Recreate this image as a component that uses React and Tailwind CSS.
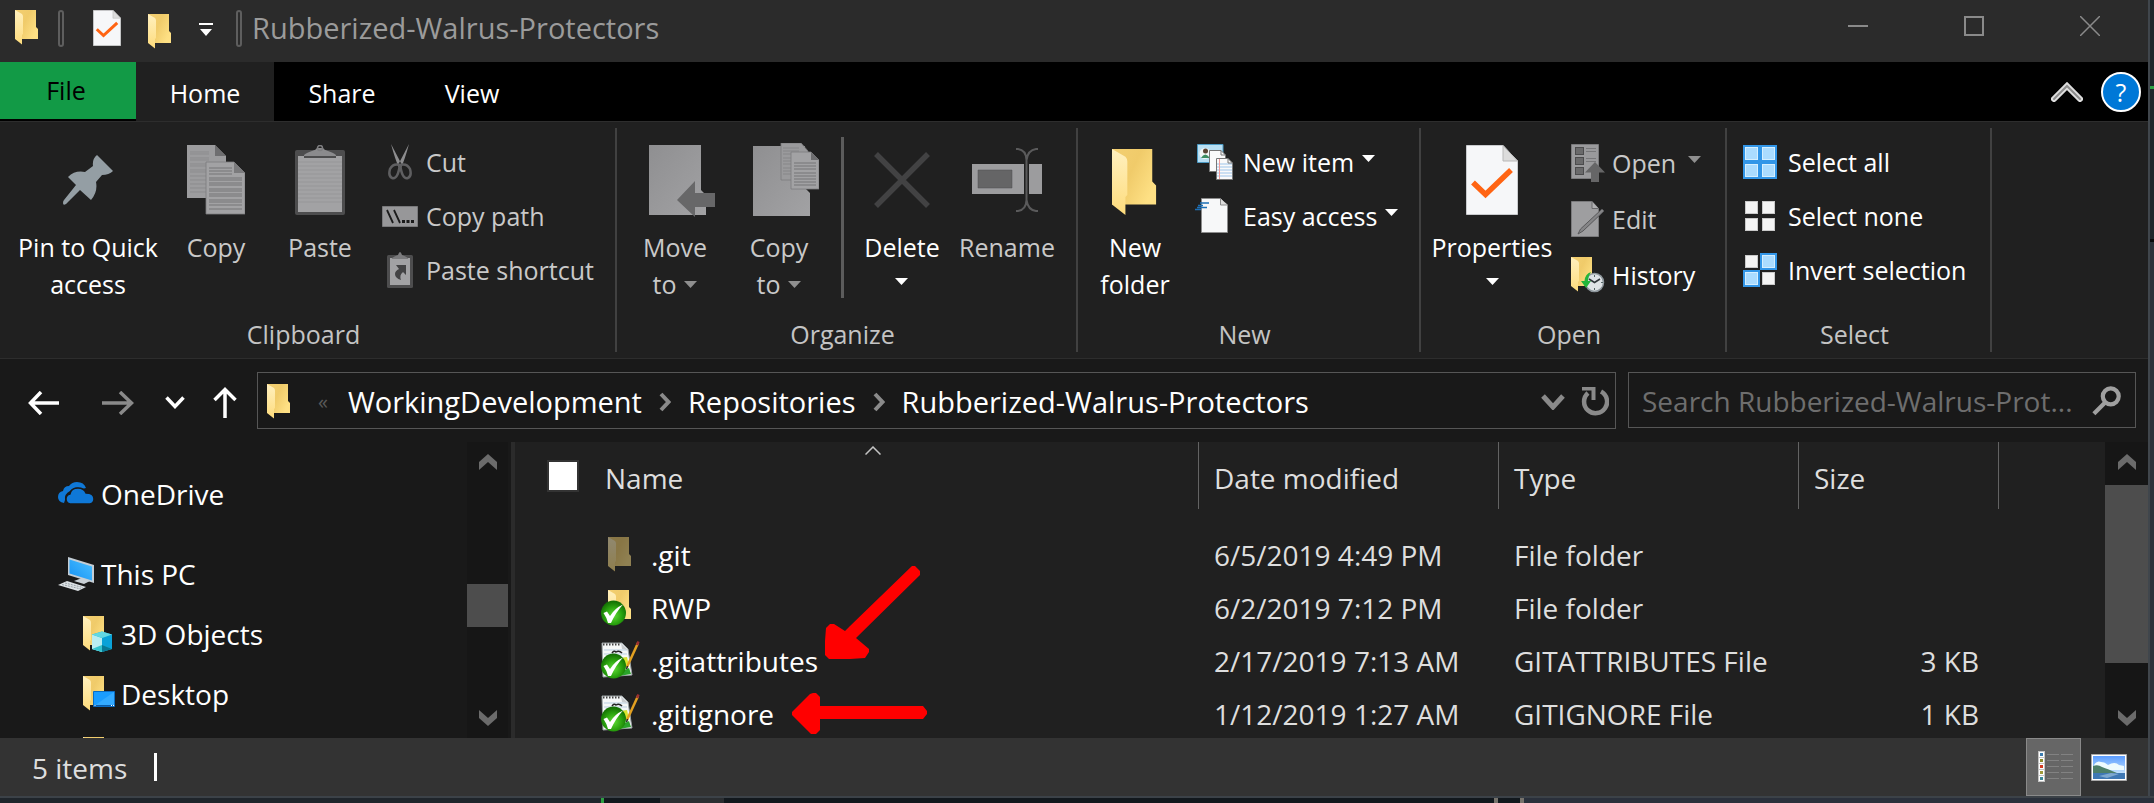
import React from "react";

/* ---------- shared gradients ---------- */
function Defs() {
  return (
    <svg width="0" height="0" className="absolute" aria-hidden="true">
      <defs>
        <linearGradient id="folderBack" x1="0" y1="0" x2="1" y2="0.6">
          <stop offset="0" stopColor="#f3cf72" />
          <stop offset="0.5" stopColor="#f0cb6a" />
          <stop offset="1" stopColor="#fee084" />
        </linearGradient>
        <linearGradient id="folderFlap" x1="0" y1="0" x2="0" y2="1">
          <stop offset="0" stopColor="#fff0bf" />
          <stop offset="1" stopColor="#fedc7c" />
        </linearGradient>
        <linearGradient id="grayPage" x1="0" y1="0" x2="1" y2="1">
          <stop offset="0" stopColor="#8f8f91" />
          <stop offset="1" stopColor="#a2a2a4" />
        </linearGradient>
        <radialGradient id="greenBall" cx="0.5" cy="0.6" r="0.55">
          <stop offset="0" stopColor="#5fdc35" />
          <stop offset="0.6" stopColor="#2ba30f" />
          <stop offset="1" stopColor="#157304" />
        </radialGradient>
        <linearGradient id="blueScreen" x1="0" y1="1" x2="1" y2="0">
          <stop offset="0" stopColor="#1592f5" />
          <stop offset="1" stopColor="#4cc0ff" />
        </linearGradient>
        <linearGradient id="sky" x1="0" y1="0" x2="0" y2="1">
          <stop offset="0" stopColor="#5a9cff" />
          <stop offset="1" stopColor="#e6f8fc" />
        </linearGradient>
      </defs>
    </svg>
  );
}

/* ---------- icons ---------- */
const FolderShape = () => (
  <>
    <path d="M0 0H21V17L23 19V29H0Z" fill="url(#folderBack)" />
    <path d="M0 0L7 4Q8 5 8 6.500V24L7 25V34.500L0 29Z" fill="url(#folderFlap)" />
  </>
);

const Folder = ({ className = "w-6 h-[35px]" }) => (
  <svg viewBox="0 0 24 35" className={className} aria-hidden="true">
    <FolderShape />
  </svg>
);

const PropertiesDoc = ({ className }) => (
  <svg viewBox="0 0 52 70" preserveAspectRatio="none" className={className} aria-hidden="true">
    <path d="M0.500 0.500H37L51.500 16V69.500H0.500Z" fill="#f6f7f9" stroke="#c9cbce" />
    <path d="M37 0.500V16H51.500Z" fill="#dcdcdc" stroke="#b8b8b8" />
    <path d="M7 37.500L19.500 49.500L45 25" fill="none" stroke="#ff6413" strokeWidth="5.500" />
  </svg>
);

const Caret = ({ className = "text-white" }) => (
  <svg viewBox="0 0 13 7" width="13" height="7" className={className} aria-hidden="true">
    <path d="M0 0H13L6.500 7Z" fill="currentColor" />
  </svg>
);

const QuickCaret = () => (
  <svg viewBox="0 0 14 14" width="14" height="14" aria-hidden="true">
    <path d="M0 0H14V2H0ZM1 6H13L7 13Z" fill="#fff" />
  </svg>
);

const Pin = () => (
  <svg viewBox="0 0 50 50" width="50" height="50" aria-hidden="true">
    <path
      d="M34 0L50 16Q46 20 39 20L33 27Q35 37 28 45L17 35L3 49Q0 51 0 48Q0 46 1 45L13 30L5 22Q12 15 22 17L30 11Q29 4 34 0Z"
      fill="#949ea4"
    />
  </svg>
);

const lines = (x1, x2, ys, color) =>
  ys.map((y) => <path key={y} d={`M${x1} ${y}H${x2}`} stroke={color} strokeWidth="1" />);

const CopyPages = () => (
  <svg viewBox="0 0 58 70" width="58" height="70" aria-hidden="true">
    <path d="M0 0H28L39 11V53H0Z" fill="#9c9c9e" />
    <path d="M28 0L39 11H28Z" fill="#6e6e70" />
    {lines(3, 22, [7, 9, 13, 15, 19, 21, 25, 27, 31, 35, 39, 43, 47], "#8b8b8d")}
    <path d="M19 17H47L58 28V69H19Z" fill="#a2a2a4" stroke="#7c7c7e" strokeWidth="0.8" />
    <path d="M47 17L58 28H47Z" fill="#7b7b7d" />
    {lines(22, 55, [33, 35, 38, 40, 44, 46, 49, 51, 55, 57, 60, 64], "#747476")}
    {lines(22, 45, [23, 26, 29], "#747476")}
  </svg>
);

const PasteBoard = () => (
  <svg viewBox="0 0 50 70" width="50" height="70" aria-hidden="true">
    <rect x="0" y="5" width="50" height="65" rx="2" fill="#4d4d4e" />
    <path d="M3 11H47V67H3Z" fill="#a2a2a4" />
    {lines(3, 47, [17, 21, 25, 29, 33, 37, 41, 45, 49, 53, 57], "#969698")}
    <path d="M9 10Q11 8 17 6Q21 5 22 3H28Q29 5 33 6Q39 8 41 10V13H9Z" fill="#8b8b8d" />
    <path d="M9 12H41" stroke="#4d4d4e" strokeWidth="2" />
    <circle cx="25" cy="3" r="2.500" fill="none" stroke="#7e7e80" strokeWidth="1.500" />
  </svg>
);

const Scissors = () => (
  <svg viewBox="0 0 24 36" width="24" height="36" aria-hidden="true">
    <path d="M3 0L14 21L11 24Q7 15 3 0ZM21 0L10 21L13 24Q17 15 21 0Z" fill="#8d8d8f" />
    <g fill="none" stroke="#5f5f61" strokeWidth="2.500">
      <path d="M12 20Q10 36 4 34Q0 32 2 25Q5 19 12 21" />
      <path d="M12 20Q14 36 20 34Q24 32 22 25Q19 19 12 21" />
    </g>
  </svg>
);

const CopyPathIcon = () => (
  <svg viewBox="0 0 36 21" width="36" height="21" aria-hidden="true">
    <path d="M0.500 0.500H35.500V20.500H0.500Z" fill="#979799" stroke="#7a7a7c" />
    <path d="M5 4L11 17M12 4L18 17" stroke="#1b1b1b" strokeWidth="1.800" />
    <path d="M20 14H23V17H20ZM24.500 14H27.500V17H24.500ZM29 14H32V17H29Z" fill="#1b1b1b" />
  </svg>
);

const PasteShortcutIcon = () => (
  <svg viewBox="0 0 26 36" width="26" height="36" aria-hidden="true">
    <rect x="0" y="3" width="26" height="33" rx="1.500" fill="#4d4d4e" />
    <path d="M3 6H23V33H3Z" fill="#a2a2a4" />
    <path d="M5 6Q8 4 11 3Q12 0 13 0Q14 0 15 3Q18 4 21 6V7H5Z" fill="#7b7b7d" />
    <path d="M9 13H19V23L16 20Q12 23 14 28Q8 26 8 22Q8 19 12 17Z" fill="#434344" />
  </svg>
);

const MoveTo = () => (
  <svg viewBox="-14 -2 80 74" width="80" height="74" aria-hidden="true">
    <path d="M0 0H52V45L57 50V70H0Z" fill="url(#grayPage)" />
    <path d="M28 55L46 36V48H66V62H46V72Z" fill="#676768" />
  </svg>
);

const CopyTo = () => (
  <svg viewBox="-14 0 80 74" width="80" height="74" aria-hidden="true">
    <path d="M0 3H52V45L57 50V73H0Z" fill="url(#grayPage)" />
    <path d="M28 0H48L55 8V37H28Z" fill="#9a9a9c" stroke="#7c7c7e" strokeWidth="0.800" />
    {lines(30, 46, [5, 8, 11, 15, 18, 21, 25, 28, 31], "#868688")}
    <path d="M38 9H58L66 17V46H38Z" fill="#a2a2a4" stroke="#7c7c7e" strokeWidth="0.800" />
    <path d="M58 9L66 17H58Z" fill="#6e6e70" />
    {lines(41, 63, [20, 23, 26, 30, 33, 36, 39, 42], "#747476")}
  </svg>
);

const DeleteX = () => (
  <svg viewBox="0 0 56 56" width="56" height="56" aria-hidden="true">
    <path d="M2 2L54 54M54 2L2 54" stroke="#424243" strokeWidth="5.500" />
  </svg>
);

const RenameIcon = () => (
  <svg viewBox="0 0 70 64" width="70" height="64" aria-hidden="true">
    <path d="M0 16H70V46H0Z" fill="#9c9c9e" />
    <path d="M6 22H40V40H6Z" fill="#656566" stroke="#4f4f50" strokeWidth="0.500" />
    <path d="M52 16H57V46H52Z" fill="#202020" />
    <path
      d="M44 1H46Q54 2 54.500 12V52Q54 62 46 63H44M66 1H64Q56 2 54.500 12V52Q56 62 64 63H66"
      fill="none"
      stroke="#5a5a5b"
      strokeWidth="2"
    />
  </svg>
);

const NewItemIcon = () => (
  <svg viewBox="0 0 36 36" width="36" height="36" aria-hidden="true">
    <path d="M0.500 0.500H26V18.500H0.500Z" fill="#b9e0f4" stroke="#4d9bc4" />
    <circle cx="8" cy="9.500" r="5.500" fill="#f3f6f7" />
    <circle cx="8.500" cy="7" r="2.500" fill="#5b4535" />
    <path d="M4 14Q8 7 13 14Z" fill="#3c8c62" />
    <path d="M12.500 6.500H24L28.500 11V27.500H12.500Z" fill="#fafafa" stroke="#777" />
    <path d="M24 6.500V11H28.500" fill="none" stroke="#777" />
    <path d="M19.500 14.500H31L35.500 19V35.500H19.500Z" fill="#fafafa" stroke="#777" />
    {lines(20, 35, [20, 23, 26, 29, 32], "#9cc4ea")}
    <path d="M22.500 15V35" stroke="#ef9a9a" />
    <path d="M31 14.500V19H35.500" fill="none" stroke="#777" />
  </svg>
);

const EasyAccessIcon = () => (
  <svg viewBox="0 0 40 36" width="40" height="36" aria-hidden="true">
    <path d="M6.500 0.500H25L32.500 7V34.500H6.500Z" fill="#f7f8f9" stroke="#8c8c8c" />
    <path d="M25.500 0.500V7H32.500" fill="#ddd" stroke="#8c8c8c" />
    <path d="M5 5H14M3 7.500H8M2 9.500H12M0 11.500H6" stroke="#1d6fb5" strokeWidth="1.500" />
  </svg>
);

const OpenIcon = () => (
  <svg viewBox="0 0 34 38" width="34" height="38" aria-hidden="true">
    <path d="M0.500 0.500H27.500V34.500H0.500Z" fill="#9a9a9c" stroke="#7a7a7c" />
    {[3, 13, 23].map((y) => (
      <rect key={y} x="4.500" y={y + 0.500} width="8" height="7" fill="#6a6a6b" stroke="#4c4c4d" />
    ))}
    {lines(15, 25, [4.5, 7.5, 14.5, 17.5], "#78787a")}
    <path d="M24 18L34 28.500H28V38H20V28.500H14Z" fill="#666667" />
  </svg>
);

const EditIcon = () => (
  <svg viewBox="0 0 34 36" width="34" height="36" aria-hidden="true">
    <path d="M0.500 0.500H21L27.500 7.500V35.500H0.500Z" fill="#9e9ea0" stroke="#7a7a7c" />
    <path d="M21 0.500V7.500H27.500" fill="#b0b0b2" stroke="#6a6a6c" />
    <path d="M31 8L33 10L12 30L7 33L9.500 28Z" fill="#858587" stroke="#58585a" />
  </svg>
);

const HistoryIcon = () => (
  <svg viewBox="0 0 34 36" width="34" height="36" aria-hidden="true">
    <FolderShape />
    <circle cx="23.500" cy="25.500" r="9" fill="#dfe3e6" stroke="#8e979d" strokeWidth="1.500" />
    <path d="M18 22L23.500 25.500L29 22" fill="none" stroke="#30363a" strokeWidth="1.500" />
    <path d="M23.500 18V20M23.500 31V33M30 25.500H32" stroke="#566" />
    <path d="M20 15Q14 17 13.500 24H10L15 31L20 24H17Q17 19 20 15Z" fill="#24b53a" />
  </svg>
);

const Tile = ({ x, y, on }) => (
  <rect
    x={x + 0.5}
    y={y + 0.5}
    width="12"
    height="12"
    fill={on ? "#abdcff" : "#f4f4f4"}
    stroke={on ? "#d5efff" : "#c9c9c9"}
  />
);

const SelectIcon = ({ kind }) => (
  <svg viewBox="0 0 34 34" width="34" height="34" aria-hidden="true">
    {kind === "all" && <path d="M0 0H34V34H0Z" fill="#3296e8" />}
    {kind === "invert" && <path d="M17 0H34V17H17ZM0 17H17V34H0Z" fill="#3296e8" />}
    <Tile x={2} y={2} on={kind === "all"} />
    <Tile x={19} y={2} on={kind !== "none"} />
    <Tile x={2} y={19} on={kind !== "none"} />
    <Tile x={19} y={19} on={kind === "all"} />
  </svg>
);

const ArrowLeft = ({ flip }) => (
  <svg viewBox="0 0 32 24" width="32" height="24" aria-hidden="true">
    <path
      d={flip ? "M0 12H29M18 1L29.500 12L18 23" : "M31 12H3M13 1L2.500 12L13 23"}
      fill="none"
      stroke="currentColor"
      strokeWidth="3.500"
    />
  </svg>
);

const ArrowUp = () => (
  <svg viewBox="0 0 24 32" width="24" height="32" aria-hidden="true">
    <path d="M12 31V3M1.500 13L12 2.500L22.500 13" fill="none" stroke="currentColor" strokeWidth="3.500" />
  </svg>
);

const ChevronDown = ({ w = 20 }) => (
  <svg viewBox="0 0 20 13" width={w} height="13" aria-hidden="true">
    <path d="M1.500 1.500L10 10.500L18.500 1.500" fill="none" stroke="currentColor" strokeWidth="3.500" />
  </svg>
);

const AddressChevron = () => (
  <svg viewBox="0 0 24 16" width="24" height="16" aria-hidden="true">
    <path d="M2 2L12 13L22 2" fill="none" stroke="currentColor" strokeWidth="5" />
  </svg>
);

const CrumbChevron = () => (
  <svg viewBox="0 0 12 20" width="12" height="20" className="text-[#8a8a8a]" aria-hidden="true">
    <path d="M2 2L9.500 10L2 18" fill="none" stroke="currentColor" strokeWidth="4" />
  </svg>
);

const Refresh = () => (
  <svg viewBox="0 0 28 30" width="28" height="30" aria-hidden="true">
    <path d="M20 4.500A11.500 11.500 0 1 1 7 6" fill="none" stroke="currentColor" strokeWidth="4.500" />
    <path d="M1 1.500H12.500V13" fill="none" stroke="currentColor" strokeWidth="4" />
  </svg>
);

const SearchIcon = () => (
  <svg viewBox="0 0 32 32" width="30" height="30" aria-hidden="true">
    <circle cx="20" cy="11" r="8.500" fill="none" stroke="currentColor" strokeWidth="4.500" />
    <path d="M14 17.500L2 29.500" stroke="currentColor" strokeWidth="4.500" />
  </svg>
);

const ScrollArrow = ({ down }) => (
  <svg viewBox="0 0 18 16" width="18" height="16" aria-hidden="true">
    <path d={down ? "M0 0L9 8L18 0V8L9 16L0 8Z" : "M0 16L9 8L18 16V8L9 0L0 8Z"} fill="#6b6b6b" />
  </svg>
);

const OneDrive = () => (
  <svg viewBox="0 0 36 24" width="36" height="24" aria-hidden="true">
    <path
      d="M6 21Q0 20 0 15Q0 10 5 9Q6 4 11 4Q14 0 19 0Q26 0 28 6L24 7Q17 3 12 9Q6 12 7 18Z"
      fill="#0f78d7"
    />
    <path
      d="M12 22Q8 21 8 17Q8 13 12 12Q13 6 20 6Q26 6 28 11Q36 11 36 17Q36 21 32 22Z"
      fill="#0f78d7"
      stroke="#191919"
      strokeWidth="1.500"
    />
  </svg>
);

const ThisPC = () => (
  <svg viewBox="0 0 36 34" width="36" height="34" aria-hidden="true">
    <path d="M10 0L36 8V26L10 18Z" fill="#c4cdd4" />
    <path d="M11.500 2.500L34 9.500V23.500L11.500 16.500Z" fill="url(#blueScreen)" />
    <path d="M16 24L24 21L32 24L26 27Z" fill="#c9d0d5" />
    <path d="M0 28L9 24L28 30L20 34Z" fill="#dde2e5" />
    <path d="M4 27.500L23 32M7 26L25 30.500" stroke="#98a1a7" strokeWidth="1" strokeDasharray="2 1" />
  </svg>
);

const Objects3D = () => (
  <svg viewBox="0 0 34 36" width="34" height="36" aria-hidden="true">
    <FolderShape />
    <path d="M9 18.500L19 15.500L29 18.500V33L19 36L9 33Z" fill="#19b5cf" />
    <path d="M9 18.500L19 22V36L9 33Z" fill="#b9edf2" />
    <path d="M9 33L19 29V36Z" fill="#35c4cf" />
    <path d="M19 22L29 18.500V33L19 29Z" fill="#0aa2d8" />
    <path d="M19 29L29 33L19 36Z" fill="#087a96" />
    <path d="M9 18.500L19 15.500L29 18.500L19 22Z" fill="#62d8e3" />
  </svg>
);

const DesktopFolder = () => (
  <svg viewBox="0 0 34 36" width="34" height="36" aria-hidden="true">
    <FolderShape />
    <path d="M10.500 15.500H31.500V30.500H10.500Z" fill="#1a9dff" stroke="#0b6cc2" />
    <path d="M11 30L31 16V30Z" fill="#34abff" />
    <path d="M11 29.500H31" stroke="#0a5ba8" />
    <path d="M11.500 29.500H13M28 29.500H31" stroke="#fff" strokeDasharray="1 1" />
  </svg>
);

const GreenCheck = () => (
  <>
    <circle cx="12.500" cy="25" r="12.500" fill="url(#greenBall)" />
    <path d="M2.500 25L6 23.500L9 28Q14 20 22 16.500Q15 24 10 35H7Q6 30 2.500 25Z" fill="#fff" />
  </>
);

const SyncedFolder = () => (
  <svg viewBox="0 0 40 40" width="40" height="40" aria-hidden="true">
    <g transform="translate(7 2)">
      <FolderShape />
    </g>
    <GreenCheck />
  </svg>
);

const SyncedNote = () => (
  <svg viewBox="0 0 40 40" width="40" height="40" aria-hidden="true">
    <path d="M1 2H21L27 8L31 34L2 36Z" fill="#f6f8f8" stroke="#9aa2a4" />
    <path d="M2 3.500H20" stroke="#444" strokeWidth="2" strokeDasharray="1.500 1.500" />
    {lines(3, 26, [9, 13, 17, 21], "#b9cfe2")}
    <path d="M20 2L21 8L27 9Z" fill="#c8cccf" />
    <path d="M11 12Q13 9 15 11Q18 9 21 12" fill="none" stroke="#222" strokeWidth="1.500" />
    <path d="M20 17L26 16L28 25L22 27Z" fill="#d9e52c" />
    <path d="M17 32L28 27L30 33L18 35Z" fill="#2aa32a" />
    <path d="M37 2L26 26" stroke="#e2a021" strokeWidth="2.500" />
    <path d="M37.500 0.500L36 4" stroke="#9c3030" strokeWidth="2.500" />
    <path d="M26.500 25L25.500 28" stroke="#222" strokeWidth="1.500" />
    <GreenCheck />
  </svg>
);

const HiddenFolder = () => (
  <svg viewBox="0 0 40 40" width="40" height="40" className="opacity-50" aria-hidden="true">
    <g transform="translate(7 2)">
      <FolderShape />
    </g>
  </svg>
);

const DetailsView = () => (
  <svg viewBox="0 0 36 32" width="36" height="32" aria-hidden="true">
    {["#3d7db0", "#8a8a2a", "#d33a22", "#a09a3a", "#3d8a9a"].map((c, i) => (
      <g key={c}>
        <rect x="0.500" y={0.5 + i * 6} width="6" height="6" fill="#fff" stroke="#c4c4c4" />
        <rect x="2" y={2 + i * 6} width="3" height="3" fill={c} />
        <path d={`M9 ${3.5 + i * 6}H21M23 ${3.5 + i * 6}H35`} stroke="#828282" />
      </g>
    ))}
  </svg>
);

const PictureView = () => (
  <svg viewBox="0 0 36 27" width="36" height="27" aria-hidden="true">
    <path d="M0.500 0.500H35.500V26.500H0.500Z" fill="#fff" stroke="#a9a9a9" />
    <path d="M2 2H34V25H2Z" fill="url(#sky)" />
    <path d="M3 11Q6 6 10 8Q14 8 17 11Q24 7 28 11L33 12V16H3Z" fill="#eefafd" />
    <path d="M2 12Q7 10 11 13Q17 15 26 19H2Z" fill="#4d7f6a" />
    <path d="M2 19H34V25H2Z" fill="#3f78b4" />
    <path d="M8 22L20 19L28 20L16 24Z" fill="#7ea8cf" />
  </svg>
);

/* ---------- ribbon pieces ---------- */
function Group({ label, className, pad = "", children }) {
  return (
    <section className={`flex shrink-0 flex-col border-r-2 border-[#414141] ${className}`}>
      <div className={`flex flex-1 ${pad}`}>{children}</div>
      <h2 className="pr-2 pb-[2px] text-center text-[25px] leading-8 text-[#c4c4c4]">{label}</h2>
    </section>
  );
}

function BigButton({ icon, className, children }) {
  return (
    <button type="button" className={`flex shrink-0 flex-col items-center gap-[6px] self-start pt-[9px] text-[25px] leading-[37px] ${className}`}>
      <span className="flex h-[86px] items-center justify-center">{icon}</span>
      <span className="block text-center whitespace-nowrap">{children}</span>
    </button>
  );
}

function SmallButton({ icon, caret, className, children }) {
  return (
    <button type="button" className={`flex items-center text-[25px] leading-8 whitespace-nowrap ${className}`}>
      <span className="flex w-10 shrink-0 justify-center">{icon}</span>
      <span>{children}</span>
      {caret && <span className="mb-2">{caret}</span>}
    </button>
  );
}

function Ribbon() {
  const off = "text-[#c9c9c9]";
  return (
    <div className="flex h-[238px] shrink-0 border-t border-b border-[#2d2d2d] bg-[#202020] py-[6px]">
      <Group label="Clipboard" className="w-[617px]" pad="pl-3">
        <BigButton icon={<Pin />} className="w-[152px] text-white">
          Pin to Quick
          <br />
          access
        </BigButton>
        <BigButton icon={<CopyPages />} className={`w-[104px] ${off}`}>Copy</BigButton>
        <BigButton icon={<PasteBoard />} className={`w-[104px] ${off}`}>Paste</BigButton>
        <div className="ml-2 flex flex-col pt-[7px]">
          <SmallButton icon={<Scissors />} className={`h-[54px] gap-[6px] ${off}`}>Cut</SmallButton>
          <SmallButton icon={<CopyPathIcon />} className={`h-[54px] gap-[6px] ${off}`}>Copy path</SmallButton>
          <SmallButton icon={<PasteShortcutIcon />} className={`h-[54px] gap-[6px] ${off}`}>Paste shortcut</SmallButton>
        </div>
      </Group>

      <Group label="Organize" className="w-[461px]" pad="pl-[6px]">
        <BigButton icon={<MoveTo />} className={`w-[104px] ${off}`}>
          Move
          <span className="flex items-center justify-center gap-2">to <Caret className="text-[#8f8f8f]" /></span>
        </BigButton>
        <BigButton icon={<CopyTo />} className={`w-[104px] ${off}`}>
          Copy
          <span className="flex items-center justify-center gap-2">to <Caret className="text-[#8f8f8f]" /></span>
        </BigButton>
        <div className="mt-[9px] ml-[10px] h-[161px] w-[3px] bg-[#5c5c5c]" />
        <BigButton icon={<DeleteX />} className="w-[116px] text-white">
          Delete
          <span className="flex h-[30px] items-center justify-center"><Caret /></span>
        </BigButton>
        <BigButton icon={<RenameIcon />} className={`w-[94px] ${off}`}>Rename</BigButton>
      </Group>

      <Group label="New" className="w-[343px]" pad="pl-[5px]">
        <BigButton icon={<Folder className="mt-1 h-[69px] w-[46px]" />} className="w-[104px] text-white">
          New
          <br />
          folder
        </BigButton>
        <div className="ml-2 flex flex-col pt-[7px]">
          <SmallButton icon={<NewItemIcon />} caret={<Caret />} className="h-[54px] gap-2 text-white">New item</SmallButton>
          <SmallButton icon={<EasyAccessIcon />} caret={<Caret />} className="h-[54px] gap-2 text-white">Easy access</SmallButton>
        </div>
      </Group>

      <Group label="Open" className="w-[306px]" pad="pl-[6px]">
        <BigButton icon={<PropertiesDoc className="h-[70px] w-[52px]" />} className="w-[130px] text-white">
          Properties
          <span className="flex h-[30px] items-center justify-center"><Caret /></span>
        </BigButton>
        <div className="ml-[11px] flex flex-col pt-[7px]">
          <SmallButton icon={<OpenIcon />} caret={<Caret className="ml-2 text-[#8f8f8f]" />} className={`h-14 gap-1 ${off}`}>Open</SmallButton>
          <SmallButton icon={<EditIcon />} className={`h-14 gap-1 ${off}`}>Edit</SmallButton>
          <SmallButton icon={<HistoryIcon />} className="h-14 gap-1 text-white">History</SmallButton>
        </div>
      </Group>

      <Group label="Select" className="w-[265px]" pad="pl-[13px]">
        <div className="flex flex-col pt-[7px]">
          <SmallButton icon={<SelectIcon kind="all" />} className="h-[54px] gap-2 text-white">Select all</SmallButton>
          <SmallButton icon={<SelectIcon kind="none" />} className="h-[54px] gap-2 text-white">Select none</SmallButton>
          <SmallButton icon={<SelectIcon kind="invert" />} className="h-[54px] gap-2 text-white">Invert selection</SmallButton>
        </div>
      </Group>
    </div>
  );
}

/* ---------- title bar and tabs ---------- */
const Divider = () => <span className="h-[37px] w-[6px] rounded-sm border-2 border-[#5e5e5e]" />;

function TitleBar() {
  return (
    <header className="flex h-[62px] shrink-0 items-start bg-[#2b2b2b]">
      <div className="flex flex-1 items-start pt-[10px] pl-[15px]">
        <Folder />
        <div className="ml-[19px] flex"><Divider /></div>
        <button type="button" aria-label="Properties" className="ml-[29px]">
          <PropertiesDoc className="h-9 w-7" />
        </button>
        <button type="button" aria-label="New folder" className="ml-[27px] pt-1">
          <Folder />
        </button>
        <button type="button" aria-label="Customize Quick Access Toolbar" className="ml-[27px] pt-[13px]">
          <QuickCaret />
        </button>
        <div className="ml-[23px] flex"><Divider /></div>
        <h1 className="ml-[10px] text-[29px] leading-9 text-[#9b9b9b]">Rubberized-Walrus-Protectors</h1>
      </div>
      <div className="flex text-[#8a8a8a]">
        <button type="button" aria-label="Minimize" className="flex h-[52px] w-[116px] items-center justify-center">
          <svg width="20" height="20" viewBox="0 0 20 20"><path d="M0 10H20" stroke="currentColor" strokeWidth="2" /></svg>
        </button>
        <button type="button" aria-label="Maximize" className="flex h-[52px] w-[116px] items-center justify-center">
          <svg width="20" height="20" viewBox="0 0 20 20"><path d="M1 1H19V19H1Z" fill="none" stroke="currentColor" strokeWidth="2" /></svg>
        </button>
        <button type="button" aria-label="Close" className="flex h-[52px] w-[116px] items-center justify-center">
          <svg width="20" height="20" viewBox="0 0 20 20"><path d="M0 0L20 20M20 0L0 20" stroke="currentColor" strokeWidth="1.500" /></svg>
        </button>
      </div>
    </header>
  );
}

function TabBar() {
  return (
    <nav className="flex h-[59px] shrink-0 bg-black text-[25px] text-white">
      <button type="button" className="h-[57px] w-[136px] bg-[#129a46] pr-1 text-black">File</button>
      <button type="button" className="w-[138px] bg-[#202020] pt-1">Home</button>
      <button type="button" className="w-[136px] pt-1">Share</button>
      <button type="button" className="w-[124px] pt-1">View</button>
      <div className="mr-[7px] ml-auto flex items-center gap-[18px]">
        <button type="button" aria-label="Minimize the Ribbon">
          <svg width="32" height="20" viewBox="0 0 32 20">
            <path d="M3 17L16 4L29 17" fill="none" stroke="#dedede" strokeWidth="6" strokeLinecap="round" />
            <path d="M3 17L16 4L29 17" fill="none" stroke="#8c8c8c" strokeWidth="2" strokeLinecap="round" />
          </svg>
        </button>
        <button type="button" aria-label="Help" className="flex h-10 w-10 items-center justify-center rounded-full border-2 border-white bg-[#0078d7] text-[25px] leading-8">?</button>
      </div>
    </nav>
  );
}

/* ---------- address row ---------- */
function AddressRow() {
  return (
    <div className="flex h-[83px] shrink-0 items-start bg-[#191919] pt-[13px] pr-3 text-white">
      <div className="flex h-[57px] w-[257px] shrink-0 items-center pt-1 pl-7">
        <button type="button" aria-label="Back"><ArrowLeft /></button>
        <button type="button" aria-label="Forward" className="ml-[42px] text-[#8a8a8a]"><ArrowLeft flip /></button>
        <button type="button" aria-label="Recent locations" className="ml-[31px]"><ChevronDown /></button>
        <button type="button" aria-label="Up" className="ml-7"><ArrowUp /></button>
      </div>
      <div className="flex h-[57px] min-w-0 flex-1 items-center border border-[#565656] pt-[2px] pl-[9px] text-[29px]">
        <Folder />
        <span className="ml-[27px] text-xl text-[#5a5a5a]">«</span>
        <ol className="ml-5 flex items-center gap-[17px] whitespace-nowrap">
          <li><a href="#working">WorkingDevelopment</a></li>
          <li aria-hidden="true"><CrumbChevron /></li>
          <li><a href="#repositories">Repositories</a></li>
          <li aria-hidden="true"><CrumbChevron /></li>
          <li><a href="#rubberized">Rubberized-Walrus-Protectors</a></li>
        </ol>
        <button type="button" aria-label="Previous locations" className="ml-auto text-[#8a8a8a]"><AddressChevron /></button>
        <button type="button" aria-label="Refresh" className="mr-[6px] ml-4 text-[#8a8a8a]"><Refresh /></button>
      </div>
      <div className="ml-3 flex h-[56px] w-[508px] items-center border border-[#565656] px-[13px] pt-[2px] text-[28px]">
        <input
          type="text"
          aria-label="Search"
          placeholder="Search Rubberized-Walrus-Prot..."
          className="min-w-0 flex-1 bg-transparent outline-none placeholder:text-[#6e6e6e]"
        />
        <button type="button" aria-label="Search" className="text-[#a0a0a0]"><SearchIcon /></button>
      </div>
    </div>
  );
}

/* ---------- panes ---------- */
function ScrollBar({ className, thumb }) {
  return (
    <div className={`flex shrink-0 flex-col items-center bg-[#161616] py-3 ${className}`}>
      <ScrollArrow />
      <div className={`w-full bg-[#4d4d4d] ${thumb}`} />
      <div className="mt-auto flex"><ScrollArrow down /></div>
    </div>
  );
}

function Sidebar() {
  return (
    <aside className="flex w-[515px] shrink-0 border-r-4 border-[#2b2b2b] bg-[#191919]">
      <div className="min-w-0 flex-1 overflow-hidden pt-[22px] text-[28px] text-white">
        <a href="#onedrive" className="flex h-[60px] items-center gap-[7px] pl-[58px]"><OneDrive />OneDrive</a>
        <a href="#thispc" className="mt-5 flex h-[60px] items-center gap-[7px] pl-[58px]"><ThisPC />This PC</a>
        <a href="#objects" className="flex h-[60px] items-center gap-1 pl-[83px]"><Objects3D />3D Objects</a>
        <a href="#desktop" className="flex h-[60px] items-center gap-1 pl-[83px]"><DesktopFolder />Desktop</a>
        <a href="#documents" aria-label="Documents" className="flex h-[60px] items-center pl-[83px]"><Folder /></a>
      </div>
      <ScrollBar className="mr-[3px] w-[41px]" thumb="mt-[114px] h-[43px]" />
    </aside>
  );
}

const files = [
  { icon: <HiddenFolder />, name: ".git", date: "6/5/2019 4:49 PM", type: "File folder", size: "" },
  { icon: <SyncedFolder />, name: "RWP", date: "6/2/2019 7:12 PM", type: "File folder", size: "" },
  { icon: <SyncedNote />, name: ".gitattributes", date: "2/17/2019 7:13 AM", type: "GITATTRIBUTES File", size: "3 KB" },
  { icon: <SyncedNote />, name: ".gitignore", date: "1/12/2019 1:27 AM", type: "GITIGNORE File", size: "1 KB" },
];

function HeadCell({ className, children }) {
  return (
    <th className={`p-0 pb-[19px] text-left font-normal ${className}`}>
      <div className="flex h-[67px] items-center border-r border-[#636363] pt-1 pl-[15px]">{children}</div>
    </th>
  );
}

function FileList() {
  return (
    <main className="relative flex min-w-0 flex-1 overflow-hidden bg-[#202020]">
      <div className="min-w-0 flex-1">
        <table className="w-full table-fixed border-collapse text-[28px] leading-9 whitespace-nowrap text-[#dedede]">
          <thead>
            <tr>
              <th className="w-[79px] p-0 pb-[19px]">
                <div className="flex h-[67px] items-center pl-8">
                  <input type="checkbox" aria-label="Select all items" className="h-8 w-8 appearance-none border-2 border-[#333] bg-white" />
                </div>
              </th>
              <th className="w-[605px] p-0 pb-[19px] text-left font-normal">
                <div className="relative flex h-[67px] items-center border-r border-[#636363] pt-1 pl-[11px]">
                  Name
                  <svg viewBox="0 0 16 9" width="16" height="9" className="absolute top-1 left-[271px]" aria-hidden="true">
                    <path d="M0.500 8.500L8 1L15.500 8.500" fill="none" stroke="#c4c4c4" strokeWidth="1.500" />
                  </svg>
                </div>
              </th>
              <HeadCell className="w-[300px]">Date modified</HeadCell>
              <HeadCell className="w-[300px]">Type</HeadCell>
              <HeadCell className="w-[200px]">Size</HeadCell>
              <th className="p-0" aria-label="Empty" />
            </tr>
          </thead>
          <tbody>
            {files.map((f) => (
              <tr key={f.name} className="h-[53px]">
                <td className="p-0" />
                <td className="p-0 pl-[7px]">
                  <span className="flex items-center gap-[10px] text-white">{f.icon}{f.name}</span>
                </td>
                <td className="p-0 pl-[15px]">{f.date}</td>
                <td className="p-0 pl-[15px]">{f.type}</td>
                <td className="p-0 pr-5 text-right">{f.size}</td>
                <td className="p-0" />
              </tr>
            ))}
          </tbody>
        </table>
      </div>
      <ScrollBar className="w-[43px]" thumb="mt-[15px] h-[178px]" />
      <svg viewBox="792 560 136 176" width="136" height="176" className="absolute top-[118px] left-[277px]" aria-hidden="true">
        <path
          d="M912 566H915L920 571V575L856 638L869 649V652L865 658L850 659H829L825 655V641L826 628L830 624H834L845 631L850 626Z"
          fill="#f00"
        />
        <path
          d="M792 712L810 694L813 693H816L820 697V706H923L927 711V714L923 719H820V730L816 734H811L807 730L792 715Z"
          fill="#f00"
        />
      </svg>
    </main>
  );
}

function StatusBar() {
  return (
    <footer className="flex h-[58px] shrink-0 items-center bg-[#333] text-[28px] text-[#dedede]">
      <span className="w-[121px] pt-[2px] pl-8 whitespace-nowrap">5 items</span>
      <span className="ml-[33px] h-7 w-[3px] bg-white" />
      <div className="ml-auto flex h-full pr-[11px]">
        <button type="button" aria-label="Details view" className="flex w-[55px] items-center justify-center border border-[#8a8a8a] bg-[#666] pl-1"><DetailsView /></button>
        <button type="button" aria-label="Large thumbnails view" className="flex w-[56px] items-center justify-center"><PictureView /></button>
      </div>
    </footer>
  );
}

export default function App() {
  return (
    <div className="flex h-screen flex-col overflow-hidden bg-[#20252b] font-['Open_Sans','Noto_Sans',sans-serif]">
      <Defs />
      <div className="flex min-h-0 flex-1">
        <div className="flex min-w-0 flex-1 flex-col">
          <TitleBar />
          <TabBar />
          <Ribbon />
          <AddressRow />
          <div className="flex min-h-0 flex-1">
            <Sidebar />
            <FileList />
          </div>
          <StatusBar />
        </div>
        <div className="flex w-[6px] shrink-0 flex-col border-l-2 border-[#40464c] bg-[#2c323b]">
          <div className="h-[86px] bg-[#1f252b]" />
          <div className="h-[3px] bg-[#2ea043]" />
          <div className="h-[150px] bg-[#1f252b]" />
          <div className="h-[3px] bg-[#08090b]" />
        </div>
      </div>
      <div className="flex h-[7px] shrink-0 border-t-2 border-[#3c4248]">
        <div className="w-[601px] bg-[#1f252b]" />
        <div className="w-[3px] bg-[#2ea043]" />
        <div className="w-14 bg-[#12181d]" />
        <div className="w-16 bg-[#2b2e31]" />
        <div className="w-[770px] bg-[#12181d]" />
        <div className="w-1 bg-[#77736c]" />
        <div className="w-[22px] bg-[#12181d]" />
        <div className="w-1 bg-[#77736c]" />
        <div className="flex-1 bg-[#2a303b]" />
      </div>
    </div>
  );
}
